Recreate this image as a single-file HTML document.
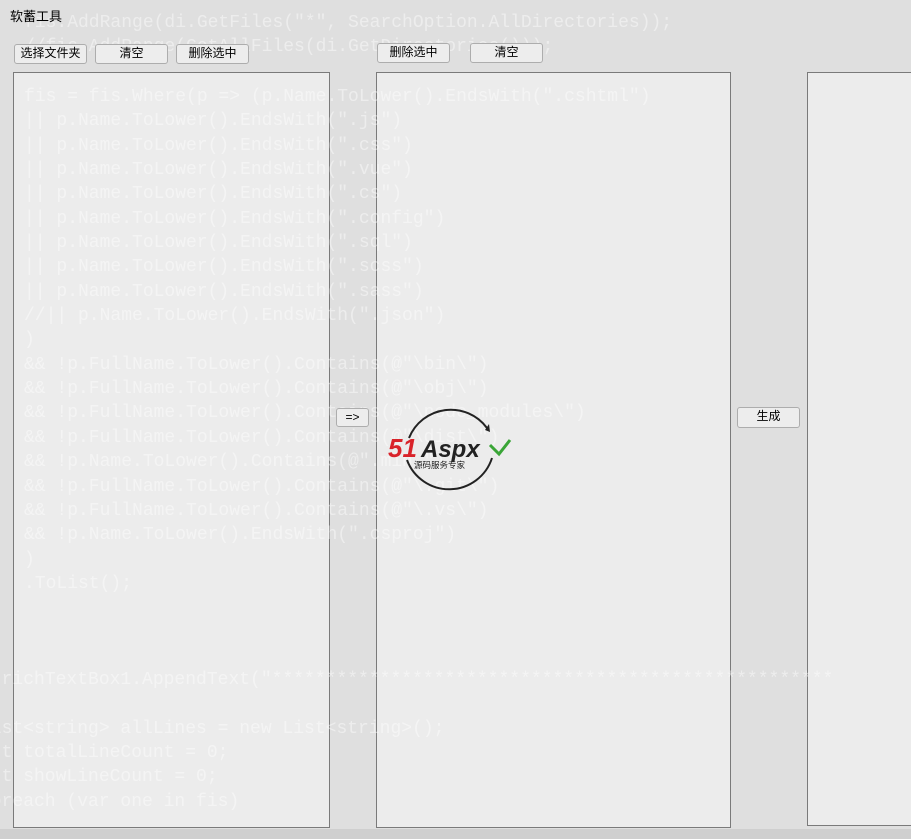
<!DOCTYPE html>
<html><head><meta charset="utf-8"><style>
body{margin:0;width:911px;height:839px;overflow:hidden;background:#dfdfdf;position:relative;font-family:"Liberation Sans","Noto Sans CJK SC",sans-serif;}
.p{position:absolute;background:#ececec;border:1px solid #7a7a7a;box-sizing:border-box;}
.b{position:absolute;background:#ededed;border:1px solid #adadad;border-radius:3px;box-sizing:border-box;font-size:12px;text-align:center;line-height:17px;color:#000;}
.code{position:absolute;left:0;top:0;font-family:"Liberation Mono",monospace;font-size:18px;line-height:24.35px;color:rgba(255,255,255,0.45);white-space:pre;pointer-events:none;}
</style></head><body>
<div class="p" style="left:13px;top:72px;width:317px;height:756px"></div>
<div class="p" style="left:376px;top:72px;width:355px;height:756px"></div>
<div class="p" style="left:807px;top:72px;width:110px;height:754px;border-right:none"></div>
<div style="position:absolute;left:0;top:829px;width:911px;height:10px;background:#cfcfcf"></div>
<div class="code" style="left:24px;top:11px">fis.AddRange(di.GetFiles("*", SearchOption.AllDirectories));
//fis.AddRange(GetAllFiles(di.GetDirectories()));</div>
<div class="code" style="left:24px;top:85px">fis = fis.Where(p =&gt; (p.Name.ToLower().EndsWith(".cshtml")
|| p.Name.ToLower().EndsWith(".js")
|| p.Name.ToLower().EndsWith(".css")
|| p.Name.ToLower().EndsWith(".vue")
|| p.Name.ToLower().EndsWith(".cs")
|| p.Name.ToLower().EndsWith(".config")
|| p.Name.ToLower().EndsWith(".sql")
|| p.Name.ToLower().EndsWith(".scss")
|| p.Name.ToLower().EndsWith(".sass")
//|| p.Name.ToLower().EndsWith(".json")
)
&amp;&amp; !p.FullName.ToLower().Contains(@"\bin\")
&amp;&amp; !p.FullName.ToLower().Contains(@"\obj\")
&amp;&amp; !p.FullName.ToLower().Contains(@"\node_modules\")
&amp;&amp; !p.FullName.ToLower().Contains(@"\dist\")
&amp;&amp; !p.Name.ToLower().Contains(@".min.")
&amp;&amp; !p.FullName.ToLower().Contains(@"\.git\")
&amp;&amp; !p.FullName.ToLower().Contains(@"\.vs\")
&amp;&amp; !p.Name.ToLower().EndsWith(".csproj")
)
.ToList();</div>
<div class="code" style="left:-20px;top:668px">  richTextBox1.AppendText("****************************************************

list&lt;string&gt; allLines = new List&lt;string&gt;();
int totalLineCount = 0;
int showLineCount = 0;
foreach (var one in fis)</div>
<div style="position:absolute;left:10px;top:6px;font-size:13px;color:#000">软蓄工具</div>
<div class="b" style="left:14px;top:44px;width:73px;height:20px">选择文件夹</div>
<div class="b" style="left:95px;top:44px;width:73px;height:20px">清空</div>
<div class="b" style="left:176px;top:44px;width:73px;height:20px">删除选中</div>
<div class="b" style="left:377px;top:43px;width:73px;height:20px">删除选中</div>
<div class="b" style="left:470px;top:43px;width:73px;height:20px">清空</div>
<div class="b" style="left:336px;top:408px;width:33px;height:19px">=&gt;</div>
<div class="b" style="left:737px;top:407px;width:63px;height:21px">生成</div>
<svg style="position:absolute;left:385px;top:400px" width="130" height="95" viewBox="0 0 130 95">
<path d="M24 38 A45 45 0 0 1 102 28" fill="none" stroke="#222" stroke-width="2"/>
<path d="M100 30 l4 -6 l1 8 z" fill="#222"/>
<path d="M107 58 A45 45 0 0 1 22 60" fill="none" stroke="#222" stroke-width="2"/>
<text x="3" y="57" font-family="Liberation Sans,sans-serif" font-style="italic" font-weight="bold" font-size="26" fill="#d9232a">51</text>
<text x="36" y="57" font-family="Liberation Sans,sans-serif" font-style="italic" font-weight="bold" font-size="24" fill="#222">Aspx</text>
<path d="M105 45 L114 54 L125 40" fill="none" stroke="#3aa537" stroke-width="3"/>
<text x="29" y="68" font-family="Noto Sans CJK SC,sans-serif" font-size="8.5" fill="#222">源码服务专家</text>
</svg>
</body></html>
